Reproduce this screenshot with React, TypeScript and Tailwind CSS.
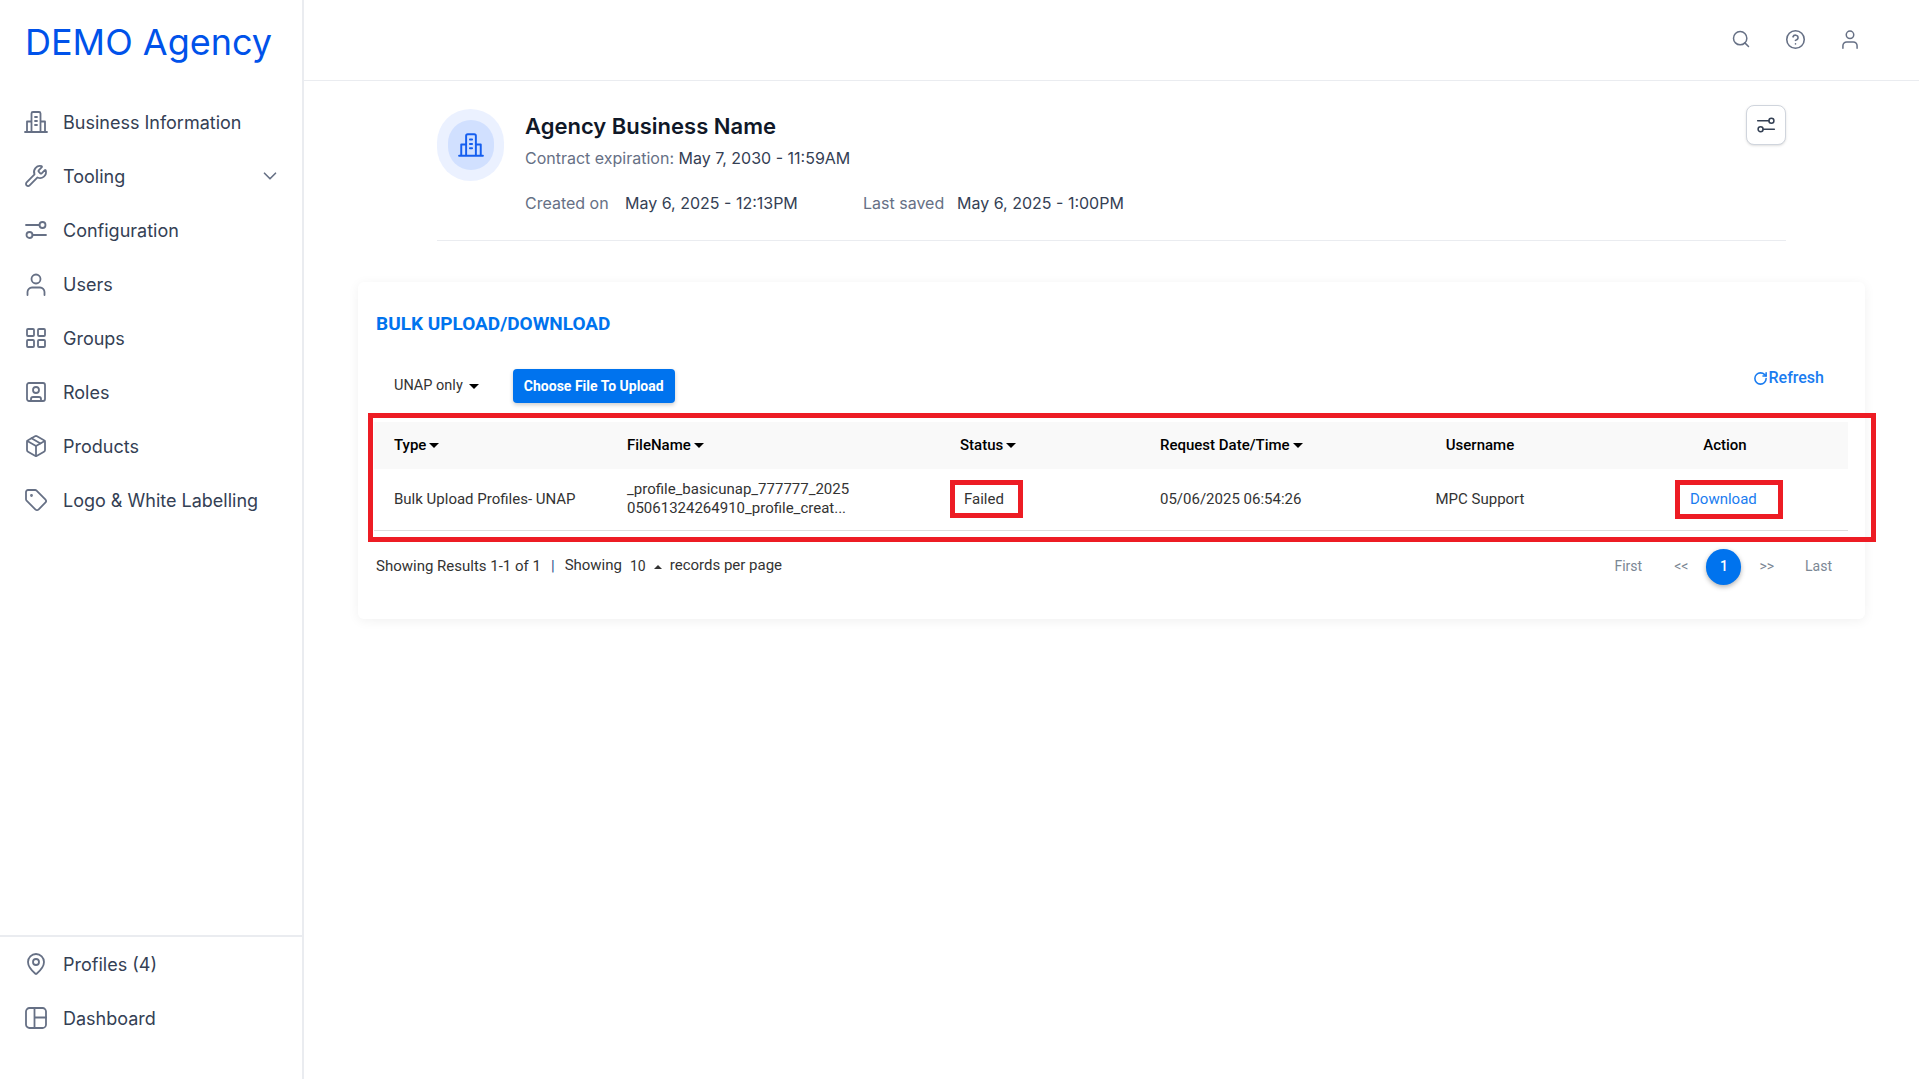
import { ChevronDown, CircleHelp, LayoutGrid, MapPin, Package, RotateCw, Search, SquareUser, Tag, Wrench } from "lucide-react";
import type { ReactNode } from "react";

const svgProps = {
  fill: "none",
  stroke: "currentColor",
  strokeWidth: 1.8,
  strokeLinecap: "round" as const,
  strokeLinejoin: "round" as const,
  viewBox: "0 0 24 24",
};

function BuildingIcon({ className }: { className?: string }) {
  return (
    <svg {...svgProps} className={className}>
      <path d="M1 22h22M3 22V11.5h4.5M21 22V11.5h-4.5M7.5 22V3.5A1.5 1.5 0 0 1 9 2h6a1.5 1.5 0 0 1 1.5 1.5V22" />
      <path d="M11 7h2M11 11h2M11 15h2" />
    </svg>
  );
}

function SlidersIcon({ className }: { className?: string }) {
  return (
    <svg {...svgProps} className={className}>
      <circle cx="18.5" cy="7" r="3" />
      <circle cx="5.5" cy="17" r="3" />
      <path d="M2 7h13.5M8.5 17H22" />
    </svg>
  );
}

function UserIcon({ className }: { className?: string }) {
  return (
    <svg {...svgProps} className={className}>
      <circle cx="12" cy="7" r="4.5" />
      <path d="M3.5 23v-3a4.5 4.5 0 0 1 4.5-4.5h8a4.5 4.5 0 0 1 4.5 4.5v3" />
    </svg>
  );
}

function DashboardIcon({ className }: { className?: string }) {
  return (
    <svg {...svgProps} className={className}>
      <rect x="2" y="2" width="20" height="20" rx="3.5" />
      <path d="M10.5 2v20M10.5 11.5H22" />
    </svg>
  );
}

function Caret({ up = false }: { up?: boolean }) {
  return (
    <span
      className={
        up
          ? "inline-block border-x-[4px] border-b-[4px] border-x-transparent border-b-[#333]"
          : "inline-block border-x-[5px] border-t-[5px] border-x-transparent border-t-black"
      }
    />
  );
}

function NavItem({ icon, label, chevron }: { icon: ReactNode; label: string; chevron?: boolean }) {
  return (
    <div className="flex h-[54px] items-center pl-6 pr-[21px] text-[18px] text-[#344054]">
      <span className="mr-[15px] flex w-6 justify-center text-[#667085]">{icon}</span>
      <span className="flex-1">{label}</span>
      {chevron && <ChevronDown className="h-[22px] w-[22px] text-[#667085]" strokeWidth={1.8} />}
    </div>
  );
}

function HeaderCell({ label, sortable, center }: { label: string; sortable?: boolean; center?: boolean }) {
  return (
    <th className={center ? "px-0 text-center font-medium" : "pl-5 text-left font-medium"}>
      <span className="inline-flex items-center gap-[3px]">
        {label}
        {sortable && <Caret />}
      </span>
    </th>
  );
}

export default function App() {
  return (
    <div className="flex h-screen bg-white font-['Inter',sans-serif]">
      <aside className="flex w-[304px] shrink-0 flex-col border-r-2 border-[#eaecf0]">
        <div className="h-[89px] pl-[25px] pt-[17px] text-[36px] leading-[50px] text-[#0052ea]">DEMO Agency</div>
        <nav className="flex-1 pt-[6px]">
          <NavItem icon={<BuildingIcon className="h-6 w-6" />} label="Business Information" />
          <NavItem icon={<Wrench className="h-6 w-6" strokeWidth={1.8} />} label="Tooling" chevron />
          <NavItem icon={<SlidersIcon className="h-6 w-6" />} label="Configuration" />
          <NavItem icon={<UserIcon className="h-6 w-6" />} label="Users" />
          <NavItem icon={<LayoutGrid className="h-6 w-6" strokeWidth={1.8} />} label="Groups" />
          <NavItem icon={<SquareUser className="h-[26px] w-[26px]" strokeWidth={1.8} />} label="Roles" />
          <NavItem icon={<Package className="h-6 w-6" strokeWidth={1.8} />} label="Products" />
          <NavItem icon={<Tag className="h-[26px] w-[26px]" strokeWidth={1.8} />} label="Logo & White Labelling" />
        </nav>
        <div className="h-[144px] border-t-2 border-[#eaecf0]">
          <NavItem icon={<MapPin className="h-6 w-6" strokeWidth={1.8} />} label="Profiles (4)" />
          <NavItem icon={<DashboardIcon className="h-6 w-6" />} label="Dashboard" />
        </div>
      </aside>

      <div className="min-w-0 flex-1">
        <header className="flex h-[81px] items-center justify-end gap-[34px] border-b border-[#eaecf0] pb-[2px] pr-[59px] text-[#667085]">
          <Search className="h-[20px] w-[20px]" strokeWidth={1.8} />
          <CircleHelp className="h-[21px] w-[21px]" strokeWidth={1.8} />
          <UserIcon className="h-[20px] w-[20px]" />
        </header>

        <main className="px-[54px] pt-7">
          <section className="mx-[79px] border-b border-[#eaecf0]">
            <div className="flex h-[131px] items-start">
              <div className="flex h-[72px] w-[67px] items-center justify-center rounded-full bg-[#ebf1ff]">
                <div className="flex h-[50px] w-[46px] items-center justify-center rounded-full bg-[#d1e0ff]">
                  <BuildingIcon className="h-[26px] w-[26px] text-[#155eef]" />
                </div>
              </div>
              <div className="ml-[21px] flex-1">
                <h1 className="text-[22px] font-semibold leading-[34px] text-[#101828]">Agency Business Name</h1>
                <p className="mt-[3px] text-[16px] leading-6 text-[#667085]">
                  Contract expiration: <span className="text-[#344054]">May 7, 2030 - 11:59AM</span>
                </p>
                <div className="mt-[21px] flex text-[16px] leading-6">
                  <span className="w-[100px] text-[#667085]">Created on</span>
                  <span className="w-[238px] text-[#344054]">May 6, 2025 - 12:13PM</span>
                  <span className="w-[100px] text-[#667085]">Last saved</span>
                  <span className="ml-[-6px] text-[#344054]">May 6, 2025 - 1:00PM</span>
                </div>
              </div>
              <button className="flex h-10 w-10 -translate-y-[4px] items-center justify-center rounded-lg border border-[#d0d5dd] bg-white text-[#344054] shadow-sm">
                <SlidersIcon className="h-5 w-5" />
              </button>
            </div>
          </section>

          <section className="mt-[41px] rounded-md bg-white pb-[34px] pl-4 pr-[17px] pt-[30px] font-['Roboto',sans-serif] shadow-[0_2px_12px_rgba(0,0,0,0.06)]">
            <h2 className="ml-[2px] text-[19px] font-bold uppercase leading-6 text-[#0073ee]">Bulk Upload/Download</h2>

            <div className="mt-[33px] flex h-[34px] items-center pl-5">
              <span className="inline-flex items-center gap-[6px] text-[14.5px] text-[#333]">
                UNAP only <Caret />
              </span>
              <button className="ml-[34px] h-[34px] w-[162px] rounded bg-[#0073ee] text-[14px] font-bold text-white shadow-[0_2px_4px_rgba(0,0,0,0.2)]">
                Choose File To Upload
              </button>
              <span className="ml-auto mb-[16px] mr-[24px] inline-flex items-center gap-[1px] text-[16px] font-medium text-[#1a7cf0]">
                <RotateCw className="h-[15px] w-[15px]" strokeWidth={2.5} />
                Refresh
              </span>
            </div>

            <div className="relative mt-[19px]">
              <table className="w-full table-fixed border-collapse text-[15px]">
                <colgroup>
                  <col className="w-[233px]" />
                  <col className="w-[333px]" />
                  <col className="w-[200px]" />
                  <col className="w-[218px]" />
                  <col className="w-[244px]" />
                  <col />
                </colgroup>
                <thead>
                  <tr className="h-[47px] bg-[#f9f9f9] text-black">
                    <HeaderCell label="Type" sortable />
                    <HeaderCell label="FileName" sortable />
                    <HeaderCell label="Status" sortable />
                    <HeaderCell label="Request Date/Time" sortable />
                    <HeaderCell label="Username" center />
                    <HeaderCell label="Action" center />
                  </tr>
                </thead>
                <tbody>
                  <tr className="h-[61px] border-b border-[#ddd] text-[#333]">
                    <td className="pl-5">Bulk Upload Profiles- UNAP</td>
                    <td className="pl-5 leading-[19px]">
                      _profile_basicunap_777777_2025
                      <br />
                      05061324264910_profile_creat...
                    </td>
                    <td className="pl-[10px]">
                      <span className="inline-block h-[38px] w-[73px] border-[5px] border-[#ed1c24] pl-[9px] leading-[28px]">Failed</span>
                    </td>
                    <td className="pl-5">05/06/2025 06:54:26</td>
                    <td className="text-center">MPC Support</td>
                    <td className="pl-[73px]">
                      <span className="inline-block h-[39px] w-[108px] border-[5px] border-[#ed1c24] pl-[10px] leading-[29px] text-[#1a7cf0]">
                        Download
                      </span>
                    </td>
                  </tr>
                </tbody>
              </table>
              {/* annotation frame round the table */}
              <div className="pointer-events-none absolute -bottom-[11px] -left-[6px] -right-[28px] -top-[9px] border-[5px] border-[#ed1c24]" />
            </div>

            <div className="ml-[2px] mt-[18px] flex h-9 items-center text-[15px] text-[#333]">
              <span>Showing Results 1-1 of 1</span>
              <span className="mx-[10px] text-[#1f4e8c]">|</span>
              <span className="-translate-y-[1px]">Showing</span>
              <span className="ml-2 text-[14px]">10</span>
              <span className="ml-2 mr-2 inline-flex"><Caret up /></span>
              <span className="-translate-y-[1px]">records per page</span>
              <div className="ml-auto flex items-center pr-[16px] text-[14px] text-[#7b8794]">
                <span>First</span>
                <span className="ml-[32px]">&lt;&lt;</span>
                <span className="ml-[18px] flex h-9 w-[35px] items-center justify-center rounded-full bg-[#0073ee] font-medium text-white shadow-[0_2px_5px_rgba(0,0,0,0.3)]">
                  1
                </span>
                <span className="ml-[18px]">&gt;&gt;</span>
                <span className="ml-[31px]">Last</span>
              </div>
            </div>
          </section>
        </main>
      </div>
    </div>
  );
}
